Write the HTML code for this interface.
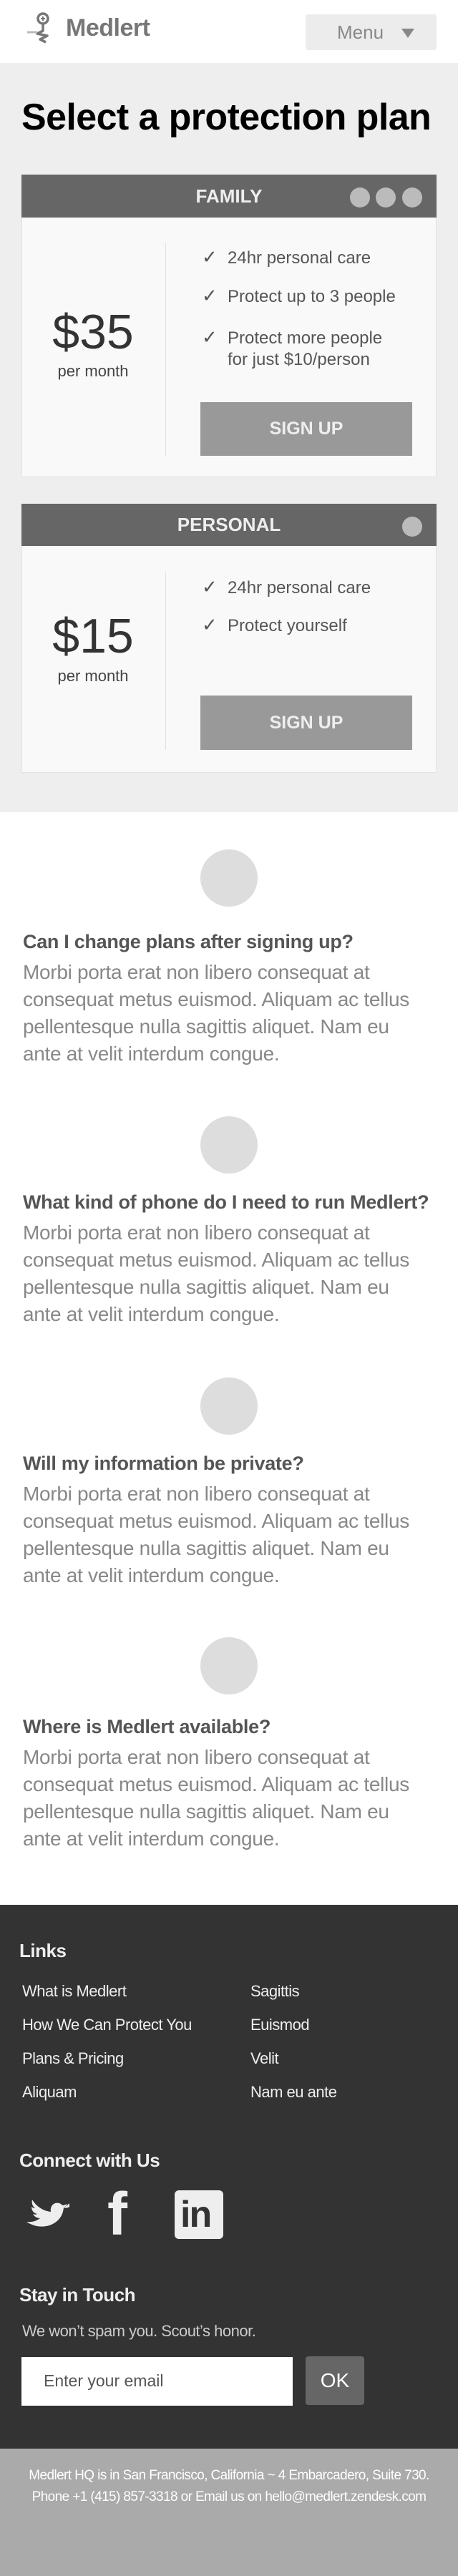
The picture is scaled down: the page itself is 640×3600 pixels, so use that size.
<!DOCTYPE html>
<html><head><meta charset="utf-8">
<style>
*{margin:0;padding:0;box-sizing:border-box}
body{width:640px;height:3600px;position:relative;background:#fff;font-family:"Liberation Sans",sans-serif;overflow:hidden}
.a{position:absolute}
.hdr{left:0;top:0;width:640px;height:88px;background:#fff}
.gray{left:0;top:88px;width:640px;height:1047px;background:#eeeeee}
.card{left:30px;width:580px;background:#f9f9f9;border:1px solid #e2e2e2}
.ch{left:30px;width:580px;background:#666;color:#eee;font-weight:bold;font-size:26px;text-align:center}
.dot{width:28px;height:28px;border-radius:50%;background:#bbb}
.feat{left:282px;font-size:24px;color:#555;line-height:30px}
.feat b{font-weight:normal;display:inline-block;width:36px;font-size:26px}
.btn{left:280px;width:296px;background:#999;color:#eee;font-weight:bold;font-size:25px;text-align:center}
.price{left:30px;width:200px;text-align:center;color:#333}
.circle{left:280px;width:80px;height:80px;border-radius:50%;background:#ddd}
.q{left:32px;font-weight:bold;font-size:27px;color:#555;letter-spacing:-0.3px}
.ans{left:32px;width:620px;font-size:28px;color:#888;line-height:38px;letter-spacing:-0.3px;white-space:nowrap}
.foot{left:0;top:2662px;width:640px;height:760px;background:#333}
.fh{left:27px;color:#eee;font-weight:bold;font-size:26px;letter-spacing:-0.5px}
.lk{color:#eee;font-size:22px;letter-spacing:-0.5px}
</style></head><body>
<div class="a hdr"></div>
<svg class="a" style="left:36px;top:16px" width="56" height="46" viewBox="0 0 56 46">
<circle cx="24" cy="10" r="7" fill="none" stroke="#777" stroke-width="3.5"/>
<path d="M21 10h6M24 7v6" stroke="#777" stroke-width="2"/>
<path d="M24 17v10l-8 4 14 3-10 5 8 4" fill="none" stroke="#777" stroke-width="3.5" stroke-linejoin="round"/>
<path d="M2 29h14" stroke="#bbb" stroke-width="3"/>
</svg>
<div class="a" style="left:92px;top:20px;font-size:34px;font-weight:bold;color:#777;letter-spacing:-0.5px">Medlert</div>
<div class="a" style="left:427px;top:20px;width:183px;height:50px;background:#ececec;border-radius:3px"></div>
<div class="a" style="left:471px;top:30px;font-size:26px;color:#888">Menu</div>
<div class="a" style="left:561px;top:40px;width:0;height:0;border-left:9px solid transparent;border-right:9px solid transparent;border-top:13px solid #888"></div>

<div class="a gray"></div>
<div class="a" style="left:30px;top:134px;font-size:52px;font-weight:bold;color:#000;letter-spacing:-0.6px">Select a protection plan</div>

<div class="a card" style="top:244px;height:423px"></div>
<div class="a ch" style="top:244px;height:60px;line-height:60px">FAMILY</div>
<div class="a dot" style="left:489px;top:262px"></div>
<div class="a dot" style="left:525px;top:262px"></div>
<div class="a dot" style="left:562px;top:262px"></div>
<div class="a" style="left:231px;top:339px;width:1px;height:299px;background:#e0e0e0"></div>
<div class="a price" style="top:425px;font-size:68px">$35</div>
<div class="a price" style="top:506px;font-size:22px;color:#444">per month</div>
<div class="a feat" style="top:344px"><b>✓</b>24hr personal care</div>
<div class="a feat" style="top:398px"><b>✓</b>Protect up to 3 people</div>
<div class="a feat" style="top:456px"><b>✓</b>Protect more people<br><span style="padding-left:36px">for just $10/person</span></div>
<div class="a btn" style="top:562px;height:75px;line-height:75px">SIGN UP</div>

<div class="a card" style="top:704px;height:376px"></div>
<div class="a ch" style="top:704px;height:59px;line-height:59px">PERSONAL</div>
<div class="a dot" style="left:562px;top:722px"></div>
<div class="a" style="left:231px;top:800px;width:1px;height:248px;background:#e0e0e0"></div>
<div class="a price" style="top:850px;font-size:68px">$15</div>
<div class="a price" style="top:932px;font-size:22px;color:#444">per month</div>
<div class="a feat" style="top:805px"><b>✓</b>24hr personal care</div>
<div class="a feat" style="top:858px"><b>✓</b>Protect yourself</div>
<div class="a btn" style="top:972px;height:76px;line-height:76px">SIGN UP</div>

<div class="a circle" style="top:1187px"></div>
<div class="a q" style="top:1301px">Can I change plans after signing up?</div>
<div class="a ans" style="top:1340px">Morbi porta erat non libero consequat at<br>consequat metus euismod. Aliquam ac tellus<br>pellentesque nulla sagittis aliquet. Nam eu<br>ante at velit interdum congue.</div>

<div class="a circle" style="top:1560px"></div>
<div class="a q" style="top:1665px">What kind of phone do I need to run Medlert?</div>
<div class="a ans" style="top:1704px">Morbi porta erat non libero consequat at<br>consequat metus euismod. Aliquam ac tellus<br>pellentesque nulla sagittis aliquet. Nam eu<br>ante at velit interdum congue.</div>

<div class="a circle" style="top:1925px"></div>
<div class="a q" style="top:2030px">Will my information be private?</div>
<div class="a ans" style="top:2069px">Morbi porta erat non libero consequat at<br>consequat metus euismod. Aliquam ac tellus<br>pellentesque nulla sagittis aliquet. Nam eu<br>ante at velit interdum congue.</div>

<div class="a circle" style="top:2288px"></div>
<div class="a q" style="top:2398px">Where is Medlert available?</div>
<div class="a ans" style="top:2437px">Morbi porta erat non libero consequat at<br>consequat metus euismod. Aliquam ac tellus<br>pellentesque nulla sagittis aliquet. Nam eu<br>ante at velit interdum congue.</div>

<div class="a foot"></div>
<div class="a fh" style="top:2711px">Links</div>
<div class="a lk" style="left:31px;top:2770px">What is Medlert</div>
<div class="a lk" style="left:31px;top:2817px">How We Can Protect You</div>
<div class="a lk" style="left:31px;top:2864px">Plans &amp; Pricing</div>
<div class="a lk" style="left:31px;top:2911px">Aliquam</div>
<div class="a lk" style="left:350px;top:2770px">Sagittis</div>
<div class="a lk" style="left:350px;top:2817px">Euismod</div>
<div class="a lk" style="left:350px;top:2864px">Velit</div>
<div class="a lk" style="left:350px;top:2911px">Nam eu ante</div>
<div class="a fh" style="top:3004px">Connect with Us</div>
<svg class="a" style="left:31px;top:3068px" width="68" height="56" viewBox="0 0 68 56">
<path d="M66 16c-3 2-6 2-8 1 2-1 4-3 5-5-2 1-5 2-7 2-2-3-6-4-10-3-5 2-7 7-6 12C30 22 20 16 14 6c-1 4 0 9 4 12-2 0-4-1-5-2 0 5 3 9 8 10-2 1-4 1-6 0 2 4 6 6 10 6-5 4-12 6-19 5 21 14 50 5 52-20 2-1 5-3 8-6z" fill="#eee"/>
</svg>
<div class="a" style="left:150px;top:3058px;font-size:84px;font-weight:bold;color:#eee;line-height:72px">f</div>
<div class="a" style="left:244px;top:3061px;width:68px;height:68px;background:#eee;border-radius:6px"></div>
<div class="a" style="left:252px;top:3062px;font-size:52px;font-weight:bold;color:#333;letter-spacing:-2px;line-height:66px">in</div>
<div class="a fh" style="top:3192px">Stay in Touch</div>
<div class="a" style="left:31px;top:3245px;font-size:22px;color:#ccc;letter-spacing:-0.5px">We won’t spam you. Scout’s honor.</div>
<div class="a" style="left:30px;top:3294px;width:379px;height:68px;background:#fff"></div>
<div class="a" style="left:61px;top:3314px;font-size:23px;color:#555">Enter your email</div>
<div class="a" style="left:427px;top:3293px;width:82px;height:68px;background:#666;border-radius:4px;color:#fff;font-size:28px;text-align:center;line-height:68px">OK</div>
<div class="a" style="left:0;top:3422px;width:640px;height:178px;background:#aaa"></div>
<div class="a" style="left:0;top:3445px;width:640px;text-align:center;color:#fff;font-size:19px;line-height:30px;letter-spacing:-0.6px">Medlert HQ is in San Francisco, California ~ 4 Embarcadero, Suite 730.<br>Phone +1 (415) 857-3318 or Email us on hello@medlert.zendesk.com</div>
</body></html>
